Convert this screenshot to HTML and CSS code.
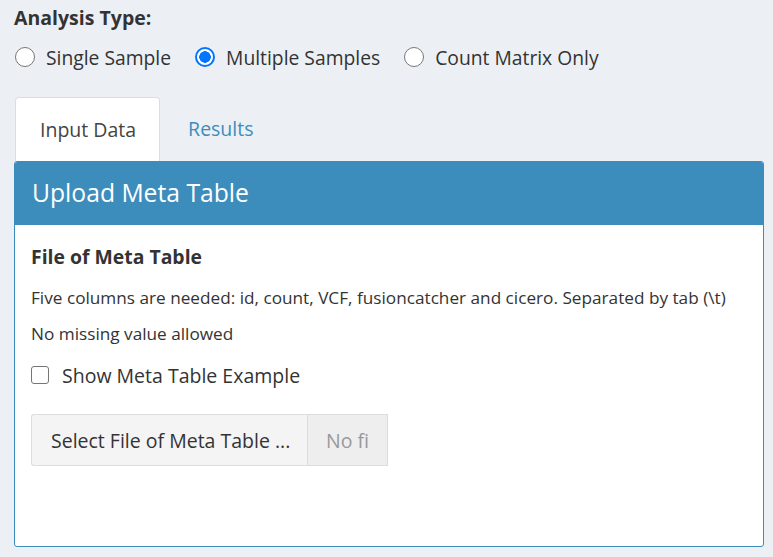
FILE: index.html
```html
<!DOCTYPE html>
<html>
<head>
<meta charset="utf-8">
<link rel="stylesheet" href="styles.css">
</head>
<body>
<div class="page">
  <div class="field-label">Analysis Type:</div>
  <div class="radios">
    <label class="radio"><span class="dot"></span><span>Single Sample</span></label>
    <label class="radio"><span class="dot on"></span><span>Multiple Samples</span></label>
    <label class="radio"><span class="dot"></span><span>Count Matrix Only</span></label>
  </div>
  <ul class="tabs">
    <li class="tab active">Input Data</li>
    <li class="tab link">Results</li>
  </ul>
  <div class="box">
    <div class="box-header">Upload Meta Table</div>
    <div class="box-body">
      <div class="sub-label">File of Meta Table</div>
      <p class="help first">Five columns are needed: id, count, VCF, fusioncatcher and cicero. Separated by tab (\t)</p>
      <p class="help">No missing value allowed</p>
      <label class="check"><span class="cbox"></span><span>Show Meta Table Example</span></label>
      <div class="file">
        <span class="file-btn">Select File of Meta Table ...</span>
        <span class="file-name">No fi</span>
      </div>
    </div>
  </div>
</div>
</body>
</html>
```
FILE: styles.css
```css
html, body {
  margin: 0;
  padding: 0;
  background: #ecf0f5;
}
body {
  font-family: "Open Sans", "Lato", sans-serif;
  color: #333;
}
.page {
  padding: 6px 9px 0 14px;
}
.field-label {
  font-weight: 700;
  font-size: 19.5px;
  line-height: 24px;
  color: #333;
}
.radios {
  display: flex;
  gap: 23px;
  margin-top: 11px;
  height: 32px;
  align-items: center;
}
.radio {
  display: flex;
  align-items: center;
  gap: 11px;
  font-size: 19.3px;
  color: #333;
}
.dot {
  width: 18px;
  height: 18px;
  border-radius: 50%;
  border: 1px solid #767676;
  background: #fff;
  box-sizing: content-box;
  margin-left: 1px;
}
.dot.on {
  border: 2px solid #0075ff;
  width: 16px;
  height: 16px;
  background: radial-gradient(circle, #0075ff 0 5.5px, #fff 6px);
}
.tabs {
  list-style: none;
  margin: 24px 0 0 0;
  padding: 0;
  display: flex;
  height: 64px;
}
.tab {
  padding: 0 23px 0 24px;
  font-size: 19.5px;
  line-height: 64px;
  color: #3c8dbc;
}
.tab.link {
  padding-left: 28px;
}
.tab.active {
  background: #fff;
  color: #444;
  border: 1px solid #ddd;
  border-bottom: none;
  border-radius: 4px 4px 0 0;
  margin-left: 1px;
}
.box {
  border: 1px solid #3c8dbc;
  border-radius: 3px;
  background: #fff;
  height: 384px;
  overflow: hidden;
}
.box-header {
  background: #3c8dbc;
  color: #fff;
  font-size: 24.7px;
  height: 63px;
  line-height: 61px;
  padding-left: 17px;
}
.box-body {
  padding: 18px 16px;
}
.sub-label {
  font-weight: 700;
  font-size: 19.4px;
  line-height: 28px;
}
.help {
  margin: 0;
  font-size: 17.2px;
  line-height: 36px;
}
.help.first {
  margin-top: 9px;
}
.check {
  display: flex;
  align-items: center;
  gap: 13px;
  font-size: 19.5px;
  margin-top: 8px;
  height: 30px;
}
.cbox {
  width: 16px;
  height: 16px;
  border: 1px solid #767676;
  border-radius: 3px;
  background: #fff;
}
.file {
  display: flex;
  margin-top: 24px;
  width: 357px;
  height: 52px;
  font-size: 19.5px;
}
.file-btn {
  background: #f4f4f4;
  border: 1px solid #ddd;
  border-right: none;
  border-radius: 3px 0 0 3px;
  padding: 0 19px;
  display: flex;
  align-items: center;
  color: #333;
  width: 237px;
  white-space: nowrap;
}
.file-name {
  flex: 1;
  background: #eee;
  border: 1px solid #ddd;
  display: flex;
  align-items: center;
  justify-content: center;
  color: #999;
}
```
